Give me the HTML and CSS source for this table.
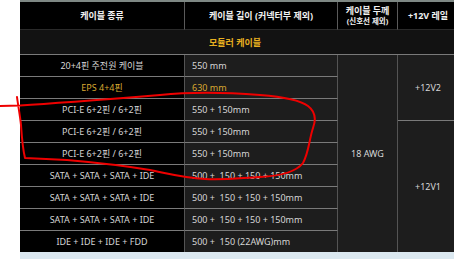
FILE: index.html
```html
<!DOCTYPE html>
<html lang="ko">
<head>
<meta charset="utf-8">
<link rel="stylesheet" href="styles.css">
</head>
<body>
<div class="frame">
  <div class="spec">
    <div class="c h">케이블 종류</div>
    <div class="c h">케이블 길이 (커넥터부 제외)</div>
    <div class="c h h2"><span>케이블 두께</span><span class="sub">(신호선 제외)</span></div>
    <div class="c h last">+12V 레일</div>

    <div class="c sec">모듈러 케이블</div>

    <div class="c n">20+4핀 주전원 케이블</div>
    <div class="c v">550 mm</div>
    <div class="c m awg">18 AWG</div>
    <div class="c m rail2">+12V2</div>

    <div class="c n gold">EPS 4+4핀</div>
    <div class="c v gold">630 mm</div>

    <div class="c n">PCI-E 6+2핀 / 6+2핀</div>
    <div class="c v">550 + 150mm</div>

    <div class="c n">PCI-E 6+2핀 / 6+2핀</div>
    <div class="c v">550 + 150mm</div>
    <div class="c m rail1">+12V1</div>

    <div class="c n">PCI-E 6+2핀 / 6+2핀</div>
    <div class="c v">550 + 150mm</div>

    <div class="c n">SATA + SATA + SATA + IDE</div>
    <div class="c v">500 +&nbsp; 150 + 150 + 150mm</div>

    <div class="c n">SATA + SATA + SATA + IDE</div>
    <div class="c v">500 +&nbsp; 150 + 150 + 150mm</div>

    <div class="c n">SATA + SATA + SATA + IDE</div>
    <div class="c v">500 +&nbsp; 150 + 150 + 150mm</div>

    <div class="c n end">IDE + IDE + IDE + FDD</div>
    <div class="c v end">500 +&nbsp; 150 (22AWG)mm</div>
  </div>
</div>
<svg class="ink" width="454" height="259" viewBox="0 0 454 259">
  <path d="M0 106 L20 105.5 C60 103 110 99 160 95 C190 92 220 92 260 95 C285 97 300 100 308 106 C316 112 316 120 313 128 C309 140 309 152 303 163 C296 172 280 176 260 177 C240 178 225 180 205 179 C185 178 170 174 150 170 C120 165 90 162 67 160 L25 158 C23 150 22 140 21 125 C20 115 18 105 17 97" fill="none" stroke="#ee0000" stroke-width="2" stroke-linecap="round" stroke-linejoin="round"/>
</svg>
</body>
</html>
```

FILE: styles.css
```css
html, body {
  margin: 0;
  padding: 0;
  background: #ffffff;
  overflow: hidden;
  width: 454px;
  height: 259px;
}
body {
  position: relative;
  font-family: "Noto Sans", "Noto Sans CJK KR", sans-serif;
  font-size: 9px;
  color: #d6d6d6;
}
.frame {
  margin-left: 20px;
  width: 440px;
  background: #dbe8f0;
  padding-bottom: 10px;
}
.spec {
  display: grid;
  grid-template-columns: 165px 153px 60px 60px;
  grid-template-rows: 28px 25px repeat(8, 22px) 21px;
  border-top: 2px solid #7e8884;
  background: #1c1c1c;
}
.c {
  box-sizing: border-box;
  display: flex;
  align-items: center;
  justify-content: center;
  border-right: 1px solid #545454;
  border-bottom: 1px solid #7a7a7a;
  background: #1d1d1d;
  white-space: nowrap;
  line-height: 1;
}
.h {
  background: #000;
  color: #f2f2f2;
  font-weight: 700;
  border-bottom-color: #2a2a2a;
  border-right-color: #5a5a5a;
}
.h2 {
  flex-direction: column;
  gap: 3px;
  padding-top: 1px;
}
.sub {
  font-size: 7.5px;
}
.last { border-right: none; }
.sec {
  grid-column: 1 / -1;
  background: #121212;
  color: #e8b020;
  font-weight: 700;
  border-right: none;
  padding-right: 8px;
}
.n {
  background: #000;
}
.v {
  justify-content: flex-start;
  padding-left: 7px;
}
.gold { color: #d9a830; }
.awg {
  grid-row: span 9;
  border-bottom: none;
}
.rail2 {
  grid-row: span 3;
  border-right: none;
}
.rail1 {
  grid-row: span 6;
  border-right: none;
  border-bottom: none;
}
.end { border-bottom: none; }
.ink {
  position: absolute;
  left: 0;
  top: 0;
  pointer-events: none;
}
```
